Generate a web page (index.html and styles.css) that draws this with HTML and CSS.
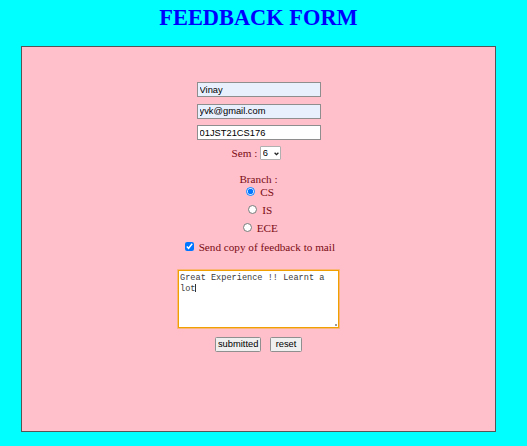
FILE: index.html
```html
<!DOCTYPE html>
<html lang="en">
<head>
<meta charset="utf-8">
<title>Feedback Form</title>
<link rel="stylesheet" href="styles.css">
</head>
<body>
<div class="page">
  <h1 class="title">FEEDBACK FORM</h1>
  <form class="box">
    <input class="field autofill f1" type="text" value="Vinay">
    <input class="field autofill f2" type="text" value="yvk@gmail.com">
    <input class="field f3" type="text" value="01JST21CS176">
    <div class="sem-row">Sem : <span class="select-wrap"><select class="sem"><option>6</option></select><svg class="chev" width="5" height="4" viewBox="0 0 5 4"><polyline points="0.6,0.7 2.5,2.6 4.4,0.7" fill="none" stroke="#222" stroke-width="1.3"/></svg></span></div>
    <div class="branch-label">Branch :</div>
    <div class="radio-row cs"><input class="radio" type="radio" name="branch" checked> CS</div>
    <div class="radio-row"><input class="radio" type="radio" name="branch"> IS</div>
    <div class="radio-row"><input class="radio" type="radio" name="branch"> ECE</div>
    <div class="check-row"><input class="check" type="checkbox" checked> Send copy of feedback to mail</div>
    <div class="ta-wrap"><textarea class="feedback">Great Experience !! Learnt a lot</textarea><span class="caret"></span><span class="grip"></span></div>
    <div class="buttons"><button class="btn btn-submit" type="button">submitted</button><button class="btn btn-reset" type="button">reset</button></div>
  </form>
</div>
</body>
</html>
```
FILE: styles.css
```css
html, body {
  margin: 0;
  padding: 0;
  background: #00ffff;
}
.page {
  width: 517px;
  font-family: "Liberation Serif", "Times New Roman", serif;
}
.title {
  margin: 0;
  padding-top: 4.5px;
  height: 26px;
  line-height: 26px;
  font-size: 22.4px;
  font-weight: bold;
  color: #0000ff;
  text-align: center;
}
.box {
  margin: 15.5px 0 0 21px;
  width: 473px;
  height: 384px;
  border: 1px solid #555;
  background: #ffc0cb;
  display: flex;
  flex-direction: column;
  align-items: center;
  color: #7a0a14;
  font-size: 11.2px;
}
.field {
  box-sizing: border-box;
  width: 124px;
  height: 15px;
  margin: 6.5px 0 0 1px;
  padding: 0 1.5px;
  border: 1px solid #8e8e8e;
  background: #fff;
  font-family: "Liberation Sans", Arial, sans-serif;
  font-size: 9.33px;
  color: #000;
  outline: none;
}
.field.f1 { margin-top: 35px; }
.autofill { background: #e8f0fe; }
.sem-row {
  margin-top: 6px;
  height: 14px;
  line-height: 14px;
  padding-right: 5px;
  white-space: nowrap;
}
.select-wrap {
  position: relative;
  display: inline-block;
  vertical-align: top;
  width: 20.5px;
  height: 14px;
}
.sem {
  appearance: none;
  -webkit-appearance: none;
  box-sizing: border-box;
  width: 20.5px;
  height: 14px;
  margin: 0;
  padding: 0 0 0 1.6px;
  border: 1px solid #b0b0b0;
  border-radius: 1px;
  background: #fff;
  font-family: "Liberation Sans", Arial, sans-serif;
  font-size: 9.33px;
  line-height: 12px;
  color: #000;
  vertical-align: top;
}
.chev {
  position: absolute;
  left: 14px;
  top: 5.6px;
  pointer-events: none;
}
.branch-label {
  margin-top: 13.97px;
  line-height: 10.5px;
  height: 10.5px;
}
.radio-row {
  line-height: 18px;
  height: 18px;
  white-space: nowrap;
}
.radio-row.cs {
  line-height: 17px;
  height: 17px;
}
.radio {
  width: 9px;
  height: 9px;
  margin: 2.1px 2.1px 0 3.5px;
  vertical-align: baseline;
}
.check-row {
  margin-top: 0.5px;
  line-height: 18px;
  height: 18px;
  white-space: nowrap;
}
.check {
  width: 9px;
  height: 9px;
  margin: 0 2.1px 0 2.8px;
  vertical-align: baseline;
}
.ta-wrap {
  position: relative;
  margin-top: 14.3px;
  width: 161px;
  height: 57.4px;
}
.feedback {
  display: block;
  box-sizing: border-box;
  width: 161px;
  height: 57.4px;
  margin: 0;
  padding: 2px 1px;
  border: 1px solid #f0a000;
  box-shadow: 0 0 0 0.8px rgba(240, 165, 20, 0.55);
  background: #fff;
  font-family: "Liberation Mono", "Courier New", monospace;
  font-size: 8.6px;
  line-height: 10.7px;
  color: #3a3a3a;
  outline: none;
  resize: none;
}
.caret {
  position: absolute;
  left: 16.5px;
  top: 13.6px;
  width: 1px;
  height: 8.6px;
  background: #333;
}
.grip {
  position: absolute;
  right: 2px;
  bottom: 2px;
  width: 2px;
  height: 2px;
  background: #9a9a9a;
}
.buttons {
  margin-top: 9.3px;
  display: flex;
  gap: 9px;
}
.btn {
  box-sizing: border-box;
  height: 14.7px;
  margin: 0;
  padding: 0;
  border: 1px solid #8f8f8f;
  border-radius: 1.5px;
  background: #efefef;
  font-family: "Liberation Sans", Arial, sans-serif;
  font-size: 9.33px;
  line-height: 12px;
  color: #000;
  text-align: center;
}
.btn-submit { width: 46px; }
.btn-reset { width: 31.7px; }
```
